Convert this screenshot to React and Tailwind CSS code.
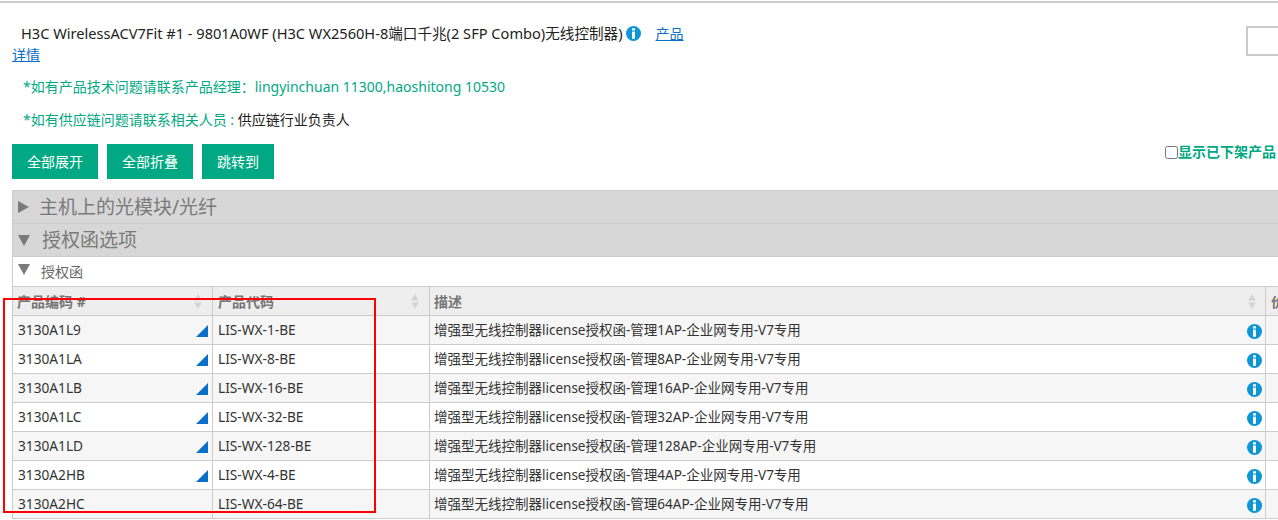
import React from "react";

const FONT = "font-['Noto_Sans','Noto_Sans_CJK_SC',sans-serif]";

const rows = [
  { code: "3130A1L9", model: "LIS-WX-1-BE", desc: "增强型无线控制器license授权函-管理1AP-企业网专用-V7专用", flag: true },
  { code: "3130A1LA", model: "LIS-WX-8-BE", desc: "增强型无线控制器license授权函-管理8AP-企业网专用-V7专用", flag: true },
  { code: "3130A1LB", model: "LIS-WX-16-BE", desc: "增强型无线控制器license授权函-管理16AP-企业网专用-V7专用", flag: true },
  { code: "3130A1LC", model: "LIS-WX-32-BE", desc: "增强型无线控制器license授权函-管理32AP-企业网专用-V7专用", flag: true },
  { code: "3130A1LD", model: "LIS-WX-128-BE", desc: "增强型无线控制器license授权函-管理128AP-企业网专用-V7专用", flag: true },
  { code: "3130A2HB", model: "LIS-WX-4-BE", desc: "增强型无线控制器license授权函-管理4AP-企业网专用-V7专用", flag: true },
  { code: "3130A2HC", model: "LIS-WX-64-BE", desc: "增强型无线控制器license授权函-管理64AP-企业网专用-V7专用", flag: false },
];

const InfoIcon = ({ className }) => (
  <svg viewBox="0 0 16 16" className={className}>
    <circle cx="8" cy="8" r="8" fill="#0d96d6" />
    <rect x="6.4" y="2.4" width="3.2" height="2.4" fill="#fff" />
    <rect x="6.4" y="6" width="3.2" height="7.6" fill="#fff" />
  </svg>
);

const SortIcon = () => (
  <svg viewBox="0 0 8 16" className="w-2 h-[15px] shrink-0">
    <path d="M4 0 L8 7 L0 7 Z M0 9 L8 9 L4 16 Z" fill="#d4d4d4" />
  </svg>
);

const Corner = () => (
  <svg viewBox="0 0 12 12" className="w-3 h-3 shrink-0 mt-[1px]">
    <path d="M12 0 V12 H0 Z" fill="#0a6fc9" />
  </svg>
);

const Btn = ({ children, w }) => (
  <button className={`${w} h-[35px] bg-[#00a983] text-white text-[14px] leading-[35px] text-center`}>
    {children}
  </button>
);

const Row = ({ row, index }) => (
  <div className={`flex h-[29px] border-b border-[#cccccc] text-[13.7px] text-[#333333] ${index % 2 === 0 ? "bg-[#f6f6f6]" : "bg-white"}`}>
    <div className="w-[201px] shrink-0 flex items-center justify-between pl-[5px] pr-[4px] border-l border-r border-[#cccccc]">
      <span>{row.code}</span>
      {row.flag && <Corner />}
    </div>
    <div className="w-[217px] shrink-0 flex items-center pl-[5px] border-r border-[#cccccc]">{row.model}</div>
    <div className="w-[836px] shrink-0 flex items-center justify-between pl-[4px] pr-[3px] border-r border-[#cccccc]">
      <span className="text-[13.5px]">{row.desc}</span>
      <InfoIcon className="w-[15px] h-[15px] mt-[2px]" />
    </div>
    <div className="flex-1" />
  </div>
);

export default function App() {
  return (
    <div className={`${FONT} relative h-[520px] w-[1278px] overflow-hidden bg-white`}>
      <div className="h-[3px] border-b-2 border-[#cccccc]" />

      <div className="flex justify-between pl-3 pt-[20px]">
        <div className="w-[680px] text-[14.6px] leading-[21px] text-[#222222]">
          <span className="pl-[9px]">H3C WirelessACV7Fit #1 - 9801A0WF (H3C WX2560H-8端口千兆(2 SFP Combo)无线控制器)</span>
          <InfoIcon className="inline-block w-[15px] h-[15px] ml-[3px] mr-[15px] align-[-2px]" />
          <a className="text-[#0a6fc9] text-[14px] underline">产品详情</a>
        </div>
        <div className="w-8 h-[30px] mt-[3px] border-2 border-[#cccccc] border-r-0 shrink-0" />
      </div>

      <div className="pl-[23px] mt-[11px] h-[21px] text-[14px] leading-[21px] text-[#00a983]">
        *如有产品技术问题请联系产品经理：lingyinchuan 11300,haoshitong 10530
      </div>
      <div className="pl-[23px] mt-[12px] h-[21px] text-[14px] leading-[21px] text-[#00a983]">
        *如有供应链问题请联系相关人员 : <span className="text-[#222222]">供应链行业负责人</span>
      </div>

      <div className="flex justify-between items-start pl-3 mt-[14px]">
        <div className="flex gap-[9px]">
          <Btn w="w-[86px]">全部展开</Btn>
          <Btn w="w-[86px]">全部折叠</Btn>
          <Btn w="w-[72px]">跳转到</Btn>
        </div>
        <label className="flex items-center pr-[2px] text-[14px] font-bold text-[#00a983] leading-4">
          <input type="checkbox" className="w-[13px] h-[13px]" readOnly />
          显示已下架产品
        </label>
      </div>

      <div className="ml-3 mt-[11px] w-[1320px]">
        <div className="flex items-center h-[33px] bg-[#d7d7d7] border-l border-t border-[#cccccc] pl-1 text-[19px] text-[#7a7a7a]">
          <span className="w-0 h-0 border-y-[6px] border-y-transparent border-l-[11px] border-l-[#7a7a7a] ml-[1px] mr-[10px]" />
          主机上的光模块/光纤
        </div>
        <div className="flex items-center h-[33px] bg-[#d7d7d7] border-l border-t border-[#cccccc] pl-1 text-[19px] text-[#7a7a7a]">
          <span className="w-0 h-0 border-x-[6px] border-x-transparent border-t-[11px] border-t-[#7a7a7a] ml-[1px] mr-[12px]" />
          授权函选项
        </div>
        <div className="flex items-center h-[31px] bg-white border-l border-t border-b border-[#cccccc] pl-1 text-[14px] text-[#666666]">
          <span className="w-0 h-0 border-x-[6px] border-x-transparent border-t-[11px] border-t-[#7a7a7a] ml-[1px] mr-[11px] mb-[4px]" />
          授权函
        </div>

        <div className="flex h-[29px] border-b border-[#cccccc] bg-[#eeeeee] text-[14px] font-bold text-[#777777]">
          <div className="w-[201px] shrink-0 flex items-center justify-between pl-[4px] pr-[10px] border-l border-r border-[#cccccc]">
            <span>产品编码 #</span>
            <SortIcon />
          </div>
          <div className="w-[217px] shrink-0 flex items-center justify-between pl-[5px] pr-[10px] border-r border-[#cccccc]">
            <span>产品代码</span>
            <SortIcon />
          </div>
          <div className="w-[836px] shrink-0 flex items-center justify-between pl-[4px] pr-[9px] border-r border-[#cccccc]">
            <span>描述</span>
            <SortIcon />
          </div>
          <div className="flex-1 flex items-center pl-[5px]">价格</div>
        </div>

        {rows.map((row, i) => (
          <Row key={row.code} row={row} index={i} />
        ))}
      </div>

      {/* annotation drawn over the screenshot */}
      <div className="absolute left-[3px] top-[298px] w-[373px] h-[215px] border-2 border-[#ff0000]" />
    </div>
  );
}
